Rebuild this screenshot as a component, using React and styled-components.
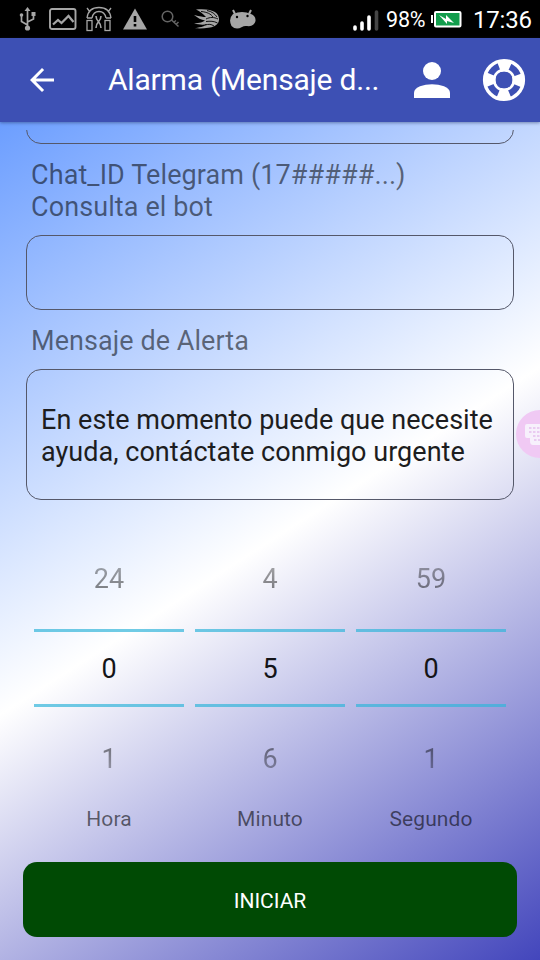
import React from "react";
import styled, { createGlobalStyle } from "styled-components";

const Global = createGlobalStyle`
  * { box-sizing: border-box; }
  body { margin: 0; background: #000; overflow: hidden; }
`;

const Screen = styled.main`
  position: relative;
  width: 540px;
  height: 960px;
  display: flex;
  flex-direction: column;
  overflow: hidden;
  font-family: Roboto, "Liberation Sans", sans-serif;
`;

const StatusBar = styled.header`
  height: 38px;
  flex: none;
  display: flex;
  align-items: center;
  justify-content: space-between;
  padding: 0 8px 0 18px;
  background: #000;
  color: #fff;
`;

const Notifications = styled.div`
  display: flex;
  align-items: center;
  color: #a6a6a6;
`;

const SystemInfo = styled.div`
  display: flex;
  align-items: center;
  height: 38px;
`;

const StatusText = styled.span`
  font-size: ${(p) => p.$size}px;
  line-height: 38px;
  width: ${(p) => p.$width}px;
  margin-left: ${(p) => p.$gap}px;
  letter-spacing: -0.2px;
  white-space: nowrap;
  padding-top: 1px;
`;

const AppBar = styled.nav`
  height: 84px;
  flex: none;
  display: flex;
  align-items: center;
  padding: 0 12px 0 24px;
  background: #3d50b4;
  color: #fff;
  z-index: 1;
  box-shadow: 0 1px 3px rgba(40, 55, 100, 0.5);
`;

const Title = styled.h1`
  width: 277px;
  margin: 0 28px 0 48px;
  font-size: 30px;
  line-height: 40px;
  font-weight: 400;
  letter-spacing: -0.2px;
  white-space: nowrap;
`;

const IconButton = styled.button`
  display: flex;
  padding: 0;
  border: 0;
  background: none;
  color: inherit;
  margin-left: ${(p) => p.$gap || 0}px;
`;

const Content = styled.section`
  height: 838px;
  display: flex;
  flex-direction: column;
  padding: 8px 26px 0;
  background: linear-gradient(147.2deg, #6c9eff 0%, #fff 50%, #4346bc 100%);
`;

const Clip = styled.div`
  height: 14px;
  overflow: hidden;
  display: flex;
  align-items: flex-end;
`;

const Field = styled.div`
  width: 100%;
  flex: none;
  height: ${(p) => p.$height}px;
  border: 1px solid #55586a;
  border-radius: 15px;
  padding: 34px 14px 0;
  font-size: 27px;
  line-height: 32px;
  letter-spacing: 0.03px;
  color: #1d1d20;
  white-space: pre;
`;

const Label = styled.label`
  height: ${(p) => p.$height}px;
  padding-left: 5px;
  margin: ${(p) => p.$top}px 0 ${(p) => p.$bottom}px;
  font-size: 27px;
  line-height: 32px;
  letter-spacing: ${(p) => p.$spacing || 0.06}px;
  color: rgba(0, 0, 0, 0.54);
  white-space: pre;
`;

const Pickers = styled.div`
  display: grid;
  grid-template-columns: repeat(3, 150px);
  column-gap: 11px;
  padding-left: 8px;
  margin-top: 34px;
`;

const Picker = styled.div`
  display: flex;
  flex-direction: column;
  align-items: center;
`;

const Adjacent = styled.div`
  height: ${(p) => (p.$below ? 99 : 95)}px;
  padding-top: ${(p) => (p.$below ? 36 : 29)}px;
  font-size: 27px;
  line-height: 32px;
  color: transparent;
  background: ${(p) =>
    p.$below
      ? "linear-gradient(rgba(0,0,0,.46) 44%, rgba(0,0,0,.3) 66%)"
      : "linear-gradient(rgba(0,0,0,.34) 34%, rgba(0,0,0,.5) 62%)"};
  background-clip: text;
`;

const Selected = styled.div`
  width: 150px;
  height: 78px;
  border: solid rgba(51, 181, 218, 0.7);
  border-width: 3px 0;
  font-size: 27px;
  line-height: 74px;
  text-align: center;
  color: #141418;
`;

const Unit = styled.span`
  font-size: 21px;
  line-height: 26px;
  color: rgba(0, 0, 0, 0.57);
  letter-spacing: 0.1px;
`;

const StartButton = styled.button`
  height: 75px;
  flex: none;
  margin: 30px -3px 0;
  border: 0;
  border-radius: 14px;
  background: #004a04;
  color: #fff;
  font: 400 21px Roboto, sans-serif;
  padding-top: 3px;
`;

const Bubble = styled.aside`
  position: absolute;
  left: 516px;
  top: 410px;
  width: 48px;
  height: 48px;
  border-radius: 50%;
  background: #f0c9f4;
  padding: 14px 0 0 9px;
`;

const UsbIcon = () => (
  <svg width="20" height="26" viewBox="0 0 20 26" fill="none" stroke="currentColor" strokeWidth="1.7">
    <path d="M9.5 23V4M9.5 19L3.5 15.5V10M9.5 16L15.5 13V8" />
    <path d="M9.5 1L12.5 5H6.5Z" fill="currentColor" stroke="none" />
    <circle cx="9.5" cy="22" r="2.6" fill="currentColor" stroke="none" />
    <circle cx="3.5" cy="9" r="1.8" fill="currentColor" stroke="none" />
    <path d="M13.5 6H17.5V10H13.5Z" fill="currentColor" stroke="none" />
  </svg>
);
const PhotoIcon = () => (
  <svg width="28" height="22" viewBox="0 0 28 22" fill="none" stroke="currentColor" strokeWidth="1.9">
    <rect x="1" y="1" width="25.5" height="20" rx="2" />
    <path d="M4 16.5L9 12L12.5 15L19.5 8L24.5 14" strokeWidth="2.2" />
  </svg>
);
const GateIcon = () => (
  <svg width="26" height="26" viewBox="0 0 26 26" fill="none" stroke="currentColor" strokeWidth="1.3">
    <path d="M1 12C2 4 7 1.5 13 1.5S24 4 25 12M6 12C7 7 10 5.5 13 5.5S19 7 20 12M1 12H6M20 12H25M4 6L1 2M22 6L25 2" />
    <rect x="1" y="14.5" width="5" height="10" />
    <rect x="19" y="14.5" width="5" height="10" />
    <path d="M10 10C10 16 15 15 15 22M15 10C15 16 10 15 10 22" strokeWidth="1.6" />
  </svg>
);
const WarnIcon = () => (
  <svg width="24" height="22" viewBox="0 0 24 22">
    <path d="M12 0.5L24 21.5H0Z" fill="currentColor" />
    <path d="M10.7 8H13.3V14H10.7ZM10.7 16H13.3V18.5H10.7Z" fill="#000" />
  </svg>
);
const KeyIcon = () => (
  <svg width="20" height="18" viewBox="0 0 20 18" fill="none" stroke="#646464" strokeWidth="1.5">
    <circle cx="6.5" cy="6.5" r="5.3" />
    <path d="M10.5 10L17.5 16.5M13 12L15 10.5M15.2 14.2L17.5 12" />
  </svg>
);
const BallIcon = () => (
  <svg width="27" height="20" viewBox="0 0 27 20">
    <path d="M3 0.5C20-1 26.5 4 26 11C25.5 17 19 20 2 19.3C9 18 12 17 14 15C10 16.3 6 15.5 1 14.5C7 14 10 13 12 11.5C8 11 5 9 1 6C7 7.5 10 8 13 8C10 5 7 2 3 0.5Z" fill="currentColor" />
    <path d="M8 2.500C14 3 18 5 20 8M14 1.500C19 2.500 22 5 24 8M13 10C17 8 21 8 25 10M13 12.500C17 12 21 12 24.500 14M12 16C16 15 18 15 21 17" fill="none" stroke="#000" strokeWidth="0.9" />
  </svg>
);
const DroidIcon = () => (
  <svg width="28" height="22" viewBox="0 0 28 22">
    <path d="M4 6Q13 2 22 6Q27 8 26.5 13Q25 19 18 18Q15 17.5 13 19Q7 22.5 2.5 18Q-1 11 4 6Z" fill="currentColor" />
    <path d="M6 6L4 2M20 6L22 2" stroke="currentColor" strokeWidth="2" />
    <circle cx="8" cy="9" r="1.2" fill="#000" />
    <circle cx="18.5" cy="8" r="1.2" fill="#000" />
  </svg>
);

const IconSlot = styled.span`
  display: flex;
  margin-left: ${(p) => p.$gap}px;
`;

const SignalIcon = () => (
  <svg width="26" height="26" viewBox="0 0 26 26" fill="none" strokeWidth="3.6" strokeLinecap="round">
    <path d="M2 21V23M9 17V23M16 11V23" stroke="#fff" />
    <path d="M23.5 6V23" stroke="#454545" />
  </svg>
);
const BatteryIcon = () => (
  <svg width="31" height="17" viewBox="0 0 31 17">
    <path d="M1 4V12" stroke="#fff" strokeWidth="2" />
    <rect x="4" y="1" width="25.5" height="14.5" rx="1" fill="#129d4c" stroke="#fff" strokeWidth="2" />
    <path d="M8 4L15 8V4L23 12L16 10V13Z" fill="#fff" />
  </svg>
);
const BackIcon = () => (
  <svg width="36" height="36" viewBox="0 0 24 24" fill="currentColor">
    <path d="M20 11H7.83l5.59-5.59L12 4l-8 8 8 8 1.41-1.41L7.83 13H20v-2z" />
  </svg>
);
const PersonIcon = () => (
  <svg width="38" height="38" viewBox="0 0 38 38" fill="currentColor">
    <circle cx="19" cy="10" r="9" />
    <path d="M1 37V32C1 26 11 23.3 19 23.3S37 26 37 32V37Z" />
  </svg>
);
const SupportIcon = () => (
  <svg width="44" height="44" viewBox="0 0 44 44" fill="none">
    <circle cx="22" cy="22" r="19.4" stroke="#fff" strokeWidth="3.4" />
    <circle cx="22" cy="22" r="14" stroke="#fff" strokeWidth="11" strokeDasharray="11 10.99" strokeDashoffset="5.5" />
    <circle cx="22" cy="22" r="10" stroke="#fff" strokeWidth="2.6" />
  </svg>
);
const KeypadIcon = () => (
  <svg width="30" height="24" viewBox="0 0 30 24">
    <path d="M2 0H28V21H8Q5 21 5 17V14H2Q0 14 0 12V2Q0 0 2 0Z" fill="#f7f0fc" />
    <path d="M4 4H15M4 8H15M8 12H15M9 16H15" stroke="#eacbf1" strokeWidth="2" strokeDasharray="2.5 1.5" />
  </svg>
);

const notifications = [
  [UsbIcon, 0], [PhotoIcon, 11], [GateIcon, 9], [WarnIcon, 11],
  [KeyIcon, 14], [BallIcon, 12], [DroidIcon, 9],
];

const units = [
  { name: "Hora", prev: 24, value: 0, next: 1 },
  { name: "Minuto", prev: 4, value: 5, next: 6 },
  { name: "Segundo", prev: 59, value: 0, next: 1 },
];

export default function App() {
  return (
    <Screen>
      <Global />
      <StatusBar>
        <Notifications>
          {notifications.map(([Icon, gap], i) => (
            <IconSlot key={i} $gap={gap}><Icon /></IconSlot>
          ))}
        </Notifications>
        <SystemInfo>
          <SignalIcon />
          <StatusText $size={21.5} $width={39} $gap={7}>98%</StatusText>
          <IconSlot $gap={6}><BatteryIcon /></IconSlot>
          <StatusText $size={24} $width={59} $gap={11}>17:36</StatusText>
        </SystemInfo>
      </StatusBar>
      <AppBar>
        <IconButton aria-label="Atrás"><BackIcon /></IconButton>
        <Title>Alarma (Mensaje d...</Title>
        <IconButton aria-label="Perfil"><PersonIcon /></IconButton>
        <IconButton aria-label="Ayuda" $gap={31}><SupportIcon /></IconButton>
      </AppBar>
      <Content>
        <Clip><Field $height={75} /></Clip>
        <Label $height={64} $top={15} $bottom={12} $spacing={0.1}>{"Chat_ID Telegram (17#####...)\nConsulta el bot"}</Label>
        <Field $height={75} />
        <Label $height={32} $top={15} $bottom={12}>Mensaje de Alerta</Label>
        <Field $height={131}>{"En este momento puede que necesite\nayuda, contáctate conmigo urgente"}</Field>
        <Pickers>
          {units.map((u) => (
            <Picker key={u.name}>
              <Adjacent>{u.prev}</Adjacent>
              <Selected>{u.value}</Selected>
              <Adjacent $below>{u.next}</Adjacent>
              <Unit>{u.name}</Unit>
            </Picker>
          ))}
        </Pickers>
        <StartButton>INICIAR</StartButton>
      </Content>
      <Bubble><KeypadIcon /></Bubble>
    </Screen>
  );
}
